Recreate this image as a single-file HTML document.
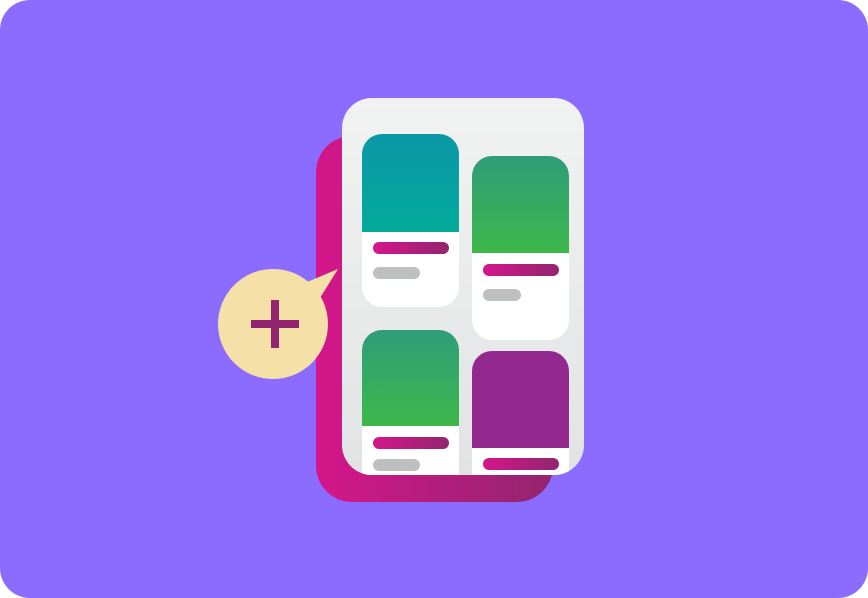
<!DOCTYPE html>
<html><head><style>
html,body{margin:0;padding:0;background:#fff;}
.bg{position:absolute;left:0;top:0;width:868px;height:598px;background:#8c6bff;border-radius:30px;overflow:hidden;}
.abs{position:absolute;}
.back{left:316px;top:136px;width:237px;height:366px;border-radius:36px;background:linear-gradient(90deg,#d4168a,#93256f);}
.front{left:342px;top:98px;width:242px;height:377px;border-radius:30px;background:linear-gradient(#f1f2f2,#e2e3e4);overflow:hidden;}
.card{position:absolute;width:97px;background:#fff;border-radius:20px;overflow:hidden;}
.img{position:absolute;left:0;top:0;width:100%;}
.pb{position:absolute;left:11px;width:76px;height:12px;border-radius:6px;background:linear-gradient(90deg,#d4168a,#93256f);}
.gb{position:absolute;left:11px;width:47px;height:12px;border-radius:6px;background:#bebfc1;}
</style></head><body>
<div class="bg">
<div class="abs back"></div>
<div class="abs front">
 <div class="card" style="left:20px;top:36px;height:173px">
  <div class="img" style="height:98px;background:linear-gradient(#0b97a8,#02aa9a)"></div>
  <div class="pb" style="top:108px"></div><div class="gb" style="top:133px"></div>
 </div>
 <div class="card" style="left:130px;top:58px;height:184px">
  <div class="img" style="height:97px;background:linear-gradient(#2f9d79,#3cb84a)"></div>
  <div class="pb" style="top:108px"></div><div class="gb" style="top:133px;width:38px"></div>
 </div>
 <div class="card" style="left:20px;top:232px;height:200px">
  <div class="img" style="height:96px;background:linear-gradient(#2f9d79,#3cb84a)"></div>
  <div class="pb" style="top:107px"></div><div class="gb" style="top:129px"></div>
 </div>
 <div class="card" style="left:130px;top:253px;height:200px">
  <div class="img" style="height:97px;background:#93288f"></div>
  <div class="pb" style="top:107px"></div>
 </div>
</div>
<svg class="abs" style="left:0;top:0" width="868" height="598">
 <path d="M300 285 L338 269 L320 298 Z" fill="#f5e1a8"/>
 <circle cx="273" cy="324" r="55" fill="#f5e1a8"/>
 <rect x="251" y="320" width="48" height="8" fill="#93246f"/>
 <rect x="271" y="300" width="8" height="48" fill="#93246f"/>
</svg>
</div>
</body></html>
